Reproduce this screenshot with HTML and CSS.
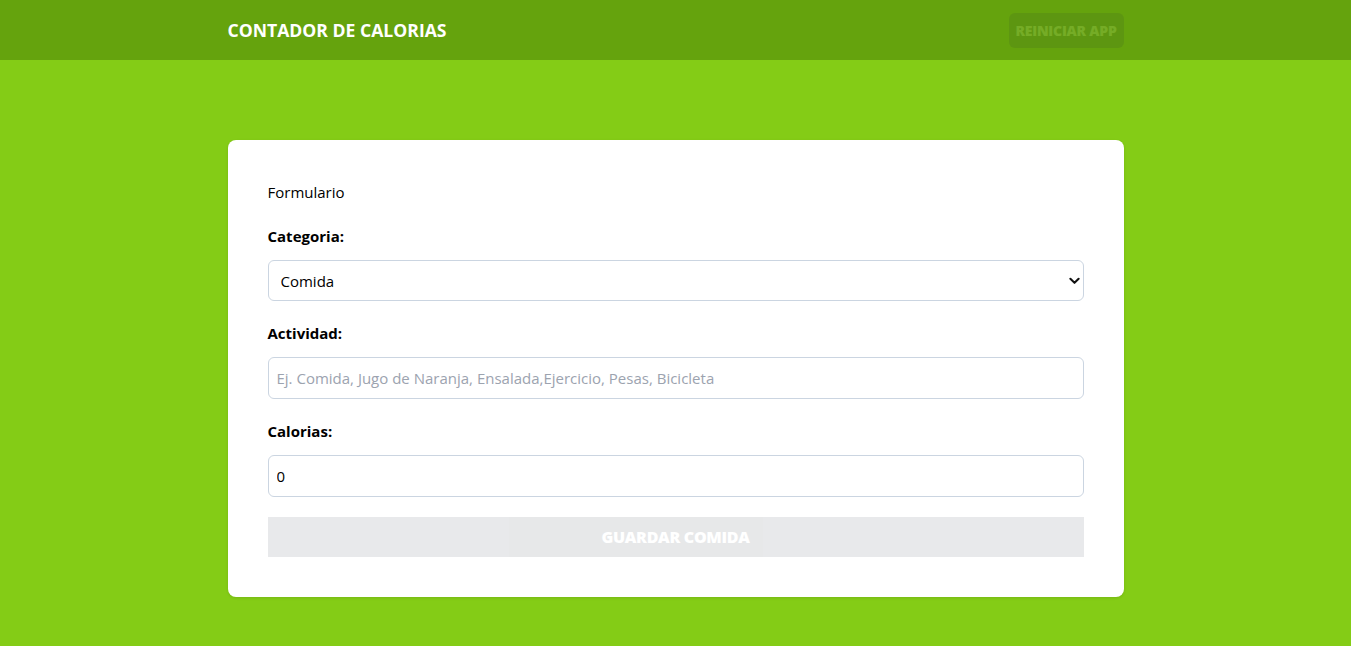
FILE: index.html
```html
<!DOCTYPE html>
<html lang="es">
<head>
<meta charset="utf-8">
<title>Contador de Calorias</title>
<link rel="stylesheet" href="styles.css">
</head>
<body>
<header class="header">
  <div class="header-inner">
    <h1 class="title">Contador de Calorias</h1>
    <button class="reset-btn" disabled>Reiniciar App</button>
  </div>
</header>
<section class="main">
  <div class="card">
    <p class="card-title">Formulario</p>
    <form class="form">
      <div class="field">
        <label class="label" for="category">Categoria:</label>
        <div class="select-wrap">
          <select id="category" class="control select">
            <option>Comida</option>
            <option>Ejercicio</option>
          </select>
          <svg class="chevron" viewBox="0 0 12 8" width="12" height="8"><path d="M1.5 1.5 L6 6 L10.5 1.5" fill="none" stroke="#111" stroke-width="2.2" stroke-linecap="round" stroke-linejoin="round"/></svg>
        </div>
      </div>
      <div class="field">
        <label class="label" for="activity">Actividad:</label>
        <input id="activity" class="control" type="text" placeholder="Ej. Comida, Jugo de Naranja, Ensalada,Ejercicio, Pesas, Bicicleta">
      </div>
      <div class="field">
        <label class="label" for="calories">Calorias:</label>
        <input id="calories" class="control" type="number" value="0">
      </div>
      <button type="button" class="submit-btn" disabled>Guardar Comida</button>
    </form>
  </div>
</section>
</body>
</html>
```

FILE: styles.css
```css
* { box-sizing: border-box; }
html, body { margin: 0; padding: 0; }
body {
  background: #84cc16;
  font-family: "Open Sans", "Noto Sans", sans-serif;
  color: #000;
  min-height: 646px;
}
.header {
  background: #65a30d;
  height: 60px;
  display: flex;
  align-items: center;
}
.header-inner {
  width: 896px;
  margin: 0 auto;
  display: flex;
  justify-content: space-between;
  align-items: center;
}
.title {
  margin: 0;
  font-size: 17.6px;
  font-weight: 700;
  color: #fff;
  text-transform: uppercase;
}
.reset-btn {
  font-family: inherit;
  font-size: 14px;
  font-weight: 800;
  text-transform: uppercase;
  background: #1f2937;
  color: #fff;
  border: 0;
  border-radius: 6px;
  height: 35px;
  width: 115px;
  padding: 0;
  opacity: 0.1;
  letter-spacing: -0.2px;
}
.main {
  padding-top: 80px;
}
.card {
  width: 896px;
  margin: 0 auto;
  background: #fff;
  border-radius: 8px;
  padding: 40px;
  box-shadow: 0 1px 3px rgba(0,0,0,0.1);
}
.card-title {
  margin: 0 0 20px;
  font-size: 15px;
  line-height: 24px;
}
.form {
  display: flex;
  flex-direction: column;
  gap: 20px;
}
.field {
  display: flex;
  flex-direction: column;
  gap: 12px;
}
.label {
  font-size: 15px;
  font-weight: 700;
  line-height: 24px;
}
.select-wrap {
  position: relative;
}
.control {
  width: 100%;
  font-family: inherit;
  font-size: 15px;
  color: #000;
  background: #fff;
  border: 1px solid #cbd5e1;
  border-radius: 6px;
  height: 42px;
  padding: 0 8px;
  outline: none;
}
.control::placeholder { color: #9ca3af; }
.select {
  height: 41px;
  padding-left: 12px;
  appearance: none;
  -webkit-appearance: none;
}
.chevron {
  position: absolute;
  right: 4px;
  top: 17px;
  width: 11px;
  height: 8px;
  pointer-events: none;
}
input[type=number]::-webkit-inner-spin-button,
input[type=number]::-webkit-outer-spin-button { -webkit-appearance: none; margin: 0; }
.submit-btn {
  font-family: inherit;
  height: 40px;
  width: 100%;
  border: 0;
  background: #1f2937;
  opacity: 0.1;
  color: #fff;
  font-size: 16px;
  font-weight: 800;
  text-transform: uppercase;
  letter-spacing: -0.3px;
}
```
